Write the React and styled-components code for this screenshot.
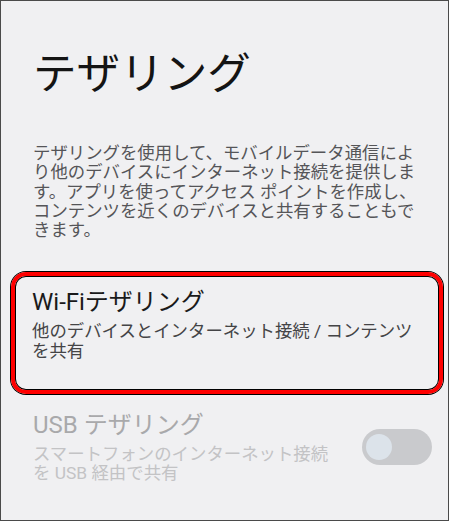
import React from "react"
import styled, { createGlobalStyle } from "styled-components"

const GlobalStyle = createGlobalStyle`
  html, body {
    margin: 0;
    padding: 0;
    background: #ffffff;
  }
  body {
    font-family: "Roboto", "Noto Sans CJK JP", sans-serif;
  }
`

const Screen = styled.div`
  box-sizing: border-box;
  width: 449px;
  height: 521px;
  border: 1px solid #4a4a4a;
  background: #f0f0f2;
  overflow: hidden;
  display: flex;
  flex-direction: column;
`

const PageTitle = styled.h1`
  margin: 43px 0 0 32px;
  font-family: "Noto Sans CJK JP", sans-serif;
  font-size: 43.6px;
  font-weight: 400;
  line-height: 52px;
  color: #141414;
`

const Description = styled.p`
  margin: 48px 0 0 32px;
  width: 394px;
  font-size: 17.4px;
  line-height: 19.3px;
  color: #555558;
`

const Item = styled.div`
  display: flex;
  align-items: center;
  padding: ${p => (p.highlight ? "12px 16px 29px 17px" : "0 16px 0 32px")};
  margin: ${p => (p.highlight ? "32px 5px 0 10px" : "17px 0 0 0")};
  border: ${p => (p.highlight ? "4px solid #ff0000" : "none")};
  border-radius: ${p => (p.highlight ? "15px" : "0")};
  box-shadow: ${p => (p.highlight ? "0 0 0 1px #000, inset 0 0 0 1px #000" : "none")};
`

const ItemText = styled.div`
  flex: 1;
  min-width: 0;
  max-width: ${p => p.maxWidth || "none"};
`

const ItemTitle = styled.div`
  font-size: 24px;
  line-height: 28px;
  color: ${p => (p.disabled ? "#a9a9ab" : "#1a1a1a")};
`

const ItemSummary = styled.div`
  margin-top: 6px;
  font-size: 17.4px;
  line-height: 19.3px;
  color: ${p => (p.disabled ? "#c3c3c5" : "#444446")};
`

const Toggle = styled.div`
  position: relative;
  flex: none;
  width: 70px;
  height: 36px;
  margin-left: 25px;
  border-radius: 18px;
  background: #c9cacd;
`

const Knob = styled.span`
  position: absolute;
  left: 4px;
  top: 5px;
  width: 26px;
  height: 26px;
  border-radius: 50%;
  background: #dce3ea;
`

const App = () => {
  return (
    <>
      <GlobalStyle />
      <Screen>
        <PageTitle>テザリング</PageTitle>
        <Description>
          テザリングを使用して、モバイルデータ通信により他のデバイスにインターネット接続を提供します。アプリを使ってアクセス ポイントを作成し、コンテンツを近くのデバイスと共有することもできます。
        </Description>
        <Item highlight>
          <ItemText>
            <ItemTitle>Wi-Fiテザリング</ItemTitle>
            <ItemSummary>他のデバイスとインターネット接続 / コンテンツを共有</ItemSummary>
          </ItemText>
        </Item>
        <Item>
          <ItemText maxWidth="306px">
            <ItemTitle disabled>USB テザリング</ItemTitle>
            <ItemSummary disabled>スマートフォンのインターネット接続を USB 経由で共有</ItemSummary>
          </ItemText>
          <Toggle>
            <Knob />
          </Toggle>
        </Item>
      </Screen>
    </>
  )
}

export default App
